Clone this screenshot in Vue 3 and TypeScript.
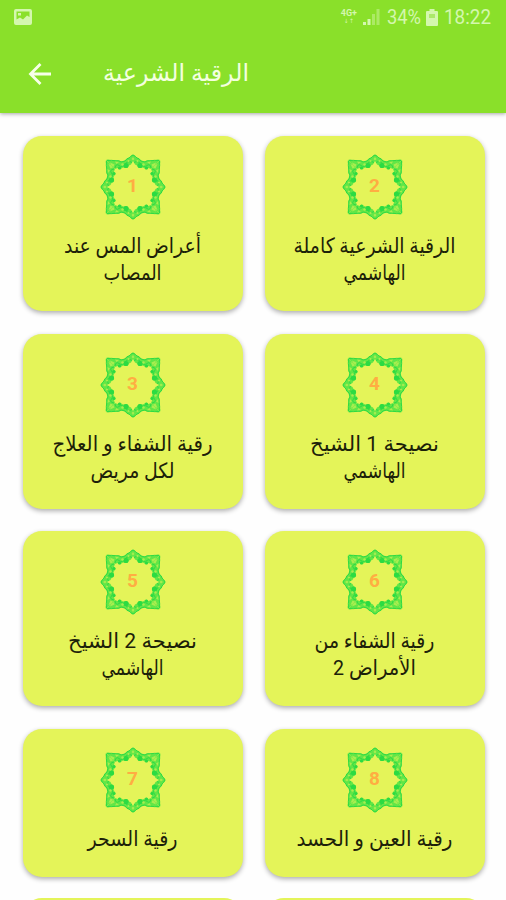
<script setup lang="ts">
interface Line {
  text: string
  width: number
}

interface Chapter {
  id: number
  lines: Line[]
}

const chapters: Chapter[] = [
  { id: 1, lines: [{ text: 'أعراض المس عند', width: 137 }, { text: 'المصاب', width: 58 }] },
  { id: 2, lines: [{ text: 'الرقية الشرعية كاملة', width: 162 }, { text: 'الهاشمي', width: 62 }] },
  { id: 3, lines: [{ text: 'رقية الشفاء و العلاج', width: 160 }, { text: 'لكل مريض', width: 84 }] },
  { id: 4, lines: [{ text: 'نصيحة 1 الشيخ', width: 129 }, { text: 'الهاشمي', width: 62 }] },
  { id: 5, lines: [{ text: 'نصيحة 2 الشيخ', width: 129 }, { text: 'الهاشمي', width: 62 }] },
  { id: 6, lines: [{ text: 'رقية الشفاء من', width: 120 }, { text: 'الأمراض 2', width: 83 }] },
  { id: 7, lines: [{ text: 'رقية السحر', width: 90 }] },
  { id: 8, lines: [{ text: 'رقية العين و الحسد', width: 156 }] },
]

const quarters: number[] = [0, 90, 180, 270]
const mirrors: number[] = [1, -1]
</script>

<template>
  <div class="screen">
    <header class="top">
      <div class="status">
        <svg class="photo" width="18" height="16" viewBox="0 0 18 16">
          <path fill-rule="evenodd" d="M2 0h14a2 2 0 0 1 2 2v12a2 2 0 0 1-2 2H2a2 2 0 0 1-2-2V2a2 2 0 0 1 2-2zM2.500 2.500v8l3.500-2 3 2 4-4 2.500 1.500V2.500zM4 4h3v2.500H4z" />
        </svg>
        <span class="net"><b>4G+</b><small>↓↑</small></span>
        <svg class="signal" width="17" height="16" viewBox="0 0 17 16">
          <path d="M0 13h3v3H0zM4.500 10h3v6h-3z" />
          <path opacity=".45" d="M9 5h3v11H9zM13.500 0h3v16h-3z" />
        </svg>
        <svg class="pct" width="34" height="26" viewBox="0 0 34 26">
          <text x="0" y="20" textLength="34" lengthAdjust="spacingAndGlyphs">34%</text>
        </svg>
        <svg class="battery" width="12" height="17" viewBox="0 0 12 17">
          <path d="M3.500 0h5v2H11a1 1 0 0 1 1 1v13a1 1 0 0 1-1 1H1a1 1 0 0 1-1-1V3a1 1 0 0 1 1-1h2.500z" />
          <path class="drain" d="M3 5h6v4H3z" />
        </svg>
        <svg class="clock" width="47" height="26" viewBox="0 0 47 26">
          <text x="0" y="20" textLength="47" lengthAdjust="spacingAndGlyphs">18:22</text>
        </svg>
      </div>
      <div class="bar">
        <svg class="back" width="24" height="24" viewBox="0 0 24 24">
          <path d="M23 12H3M12.500 2L2.500 12l10 10" />
        </svg>
        <svg class="title" width="146" height="40" viewBox="0 0 146 40">
          <text x="73" y="27" text-anchor="middle" textLength="146" lengthAdjust="spacingAndGlyphs">الرقية الشرعية</text>
        </svg>
      </div>
    </header>

    <main class="grid">
      <article v-for="c in chapters" :key="c.id" class="card">
        <div class="badge">
          <svg width="66" height="66" viewBox="-33 -33 66 66">
            <g v-for="q in quarters" :key="q" :transform="`rotate(${q})`">
              <g v-for="m in mirrors" :key="m" :transform="`scale(${m} 1)`">
                <path class="base" d="M0-32.500Q2-32 3.500-29.500Q6-29.500 8-26.500L11-25.500Q14-27 17-26.500Q20-27.500 22-26.500Q25-28 27-27L24-24 18-18 15.500-19 13-17.500 10-19.500 6-19 4-21.500 2-22.500 0-26z" />
                <path class="curl" d="M0-32Q3-30.500 4-29Q6-29 8-26L12-25Q14-27 17-26.200Q22-27 26-26.500" />
                <path class="curl" d="M1-24.500Q5-27 8-23T14-21.500T18-19" />
                <circle class="leaf" cx="7" cy="-21.500" r="2.600" />
                <circle class="leaf" cx="13.500" cy="-19" r="1.600" />
                <path class="hole" d="M0-30l1.500 2L0-26.500z" />
                <circle class="hole" cx="4.500" cy="-26" r="1.100" />
                <circle class="hole" cx="10.500" cy="-22.500" r="1.200" />
                <path class="hole" d="M14-25l4-.5-1.500 2.500zM18.500-22.500l4.500-2-1 2.500-2.500 2z" />
              </g>
            </g>
          </svg>
          <span class="num">{{ c.id }}</span>
        </div>
        <div class="label">
          <svg v-for="l in c.lines" :key="l.text" width="200" height="27" viewBox="0 0 200 27">
            <text x="99.500" y="19" text-anchor="middle" :textLength="l.width" lengthAdjust="spacingAndGlyphs">{{ l.text }}</text>
          </svg>
        </div>
      </article>
      <article class="card"></article>
      <article class="card"></article>
    </main>
  </div>
</template>

<style>
body {
  margin: 0;
  overflow: hidden;
}
</style>

<style scoped>
.screen {
  width: 506px;
  height: 900px;
  overflow: hidden;
  background: #fefefe;
  font-family: Roboto, 'DejaVu Sans', sans-serif;
}
.top {
  height: 113px;
  background: #8ae02a;
  box-shadow: 0 1px 4px rgba(0, 0, 0, 0.35);
}
.status {
  display: flex;
  align-items: center;
  height: 34px;
  padding: 0 15px 0 14px;
  color: #d4f7ae;
  fill: #d4f7ae;
}
.photo {
  margin-right: auto;
}
.net {
  display: flex;
  flex-direction: column;
  align-items: center;
  margin-right: 6px;
  font-size: 9px;
  line-height: 8px;
}
.net small {
  font-size: 6px;
}
.signal {
  margin-right: 7px;
}
.pct,
.clock {
  overflow: visible;
  font-size: 20.5px;
}
.battery {
  margin: 0 6px 0 5px;
}
.drain {
  fill: #abe96a;
}
.bar {
  display: flex;
  align-items: center;
  height: 79px;
  padding-left: 28px;
}
.back {
  fill: none;
  stroke: #f7ffe9;
  stroke-width: 2.8;
}
.title {
  margin-left: 51px;
  fill: #f4ffe0;
  font-size: 24px;
}
.grid {
  display: grid;
  grid-template-columns: 220px 220px;
  grid-template-rows: 175px 175px 175px 148px 148px;
  gap: 22.500px 22px;
  padding: 23px 22.500px 0;
}
.card {
  display: flex;
  flex-direction: column;
  align-items: center;
  padding-top: 18px;
  box-sizing: border-box;
  border-radius: 19px;
  background: #e4f459;
  box-shadow: 0 2px 5px rgba(0, 0, 0, 0.32);
}
.card:nth-last-child(-n + 2) {
  margin-top: -1px;
  box-shadow: none;
}
.badge {
  display: grid;
  place-items: center;
  width: 66px;
  height: 66px;
}
.badge > * {
  grid-area: 1 / 1;
}
.base {
  fill: #62e646;
}
.curl {
  fill: none;
  stroke: #2edb45;
  stroke-width: 1;
}
.leaf {
  fill: #2bdb42;
}
.hole {
  fill: #a9ed4f;
}
.num {
  color: #ffad42;
  font-size: 19px;
  font-weight: 700;
  line-height: 20px;
  transform: translateY(-1px);
}
.label {
  display: flex;
  flex-direction: column;
  margin-top: 14px;
  fill: #1c2109;
  font-size: 21px;
}
.label svg,
.title {
  overflow: visible;
}
</style>
